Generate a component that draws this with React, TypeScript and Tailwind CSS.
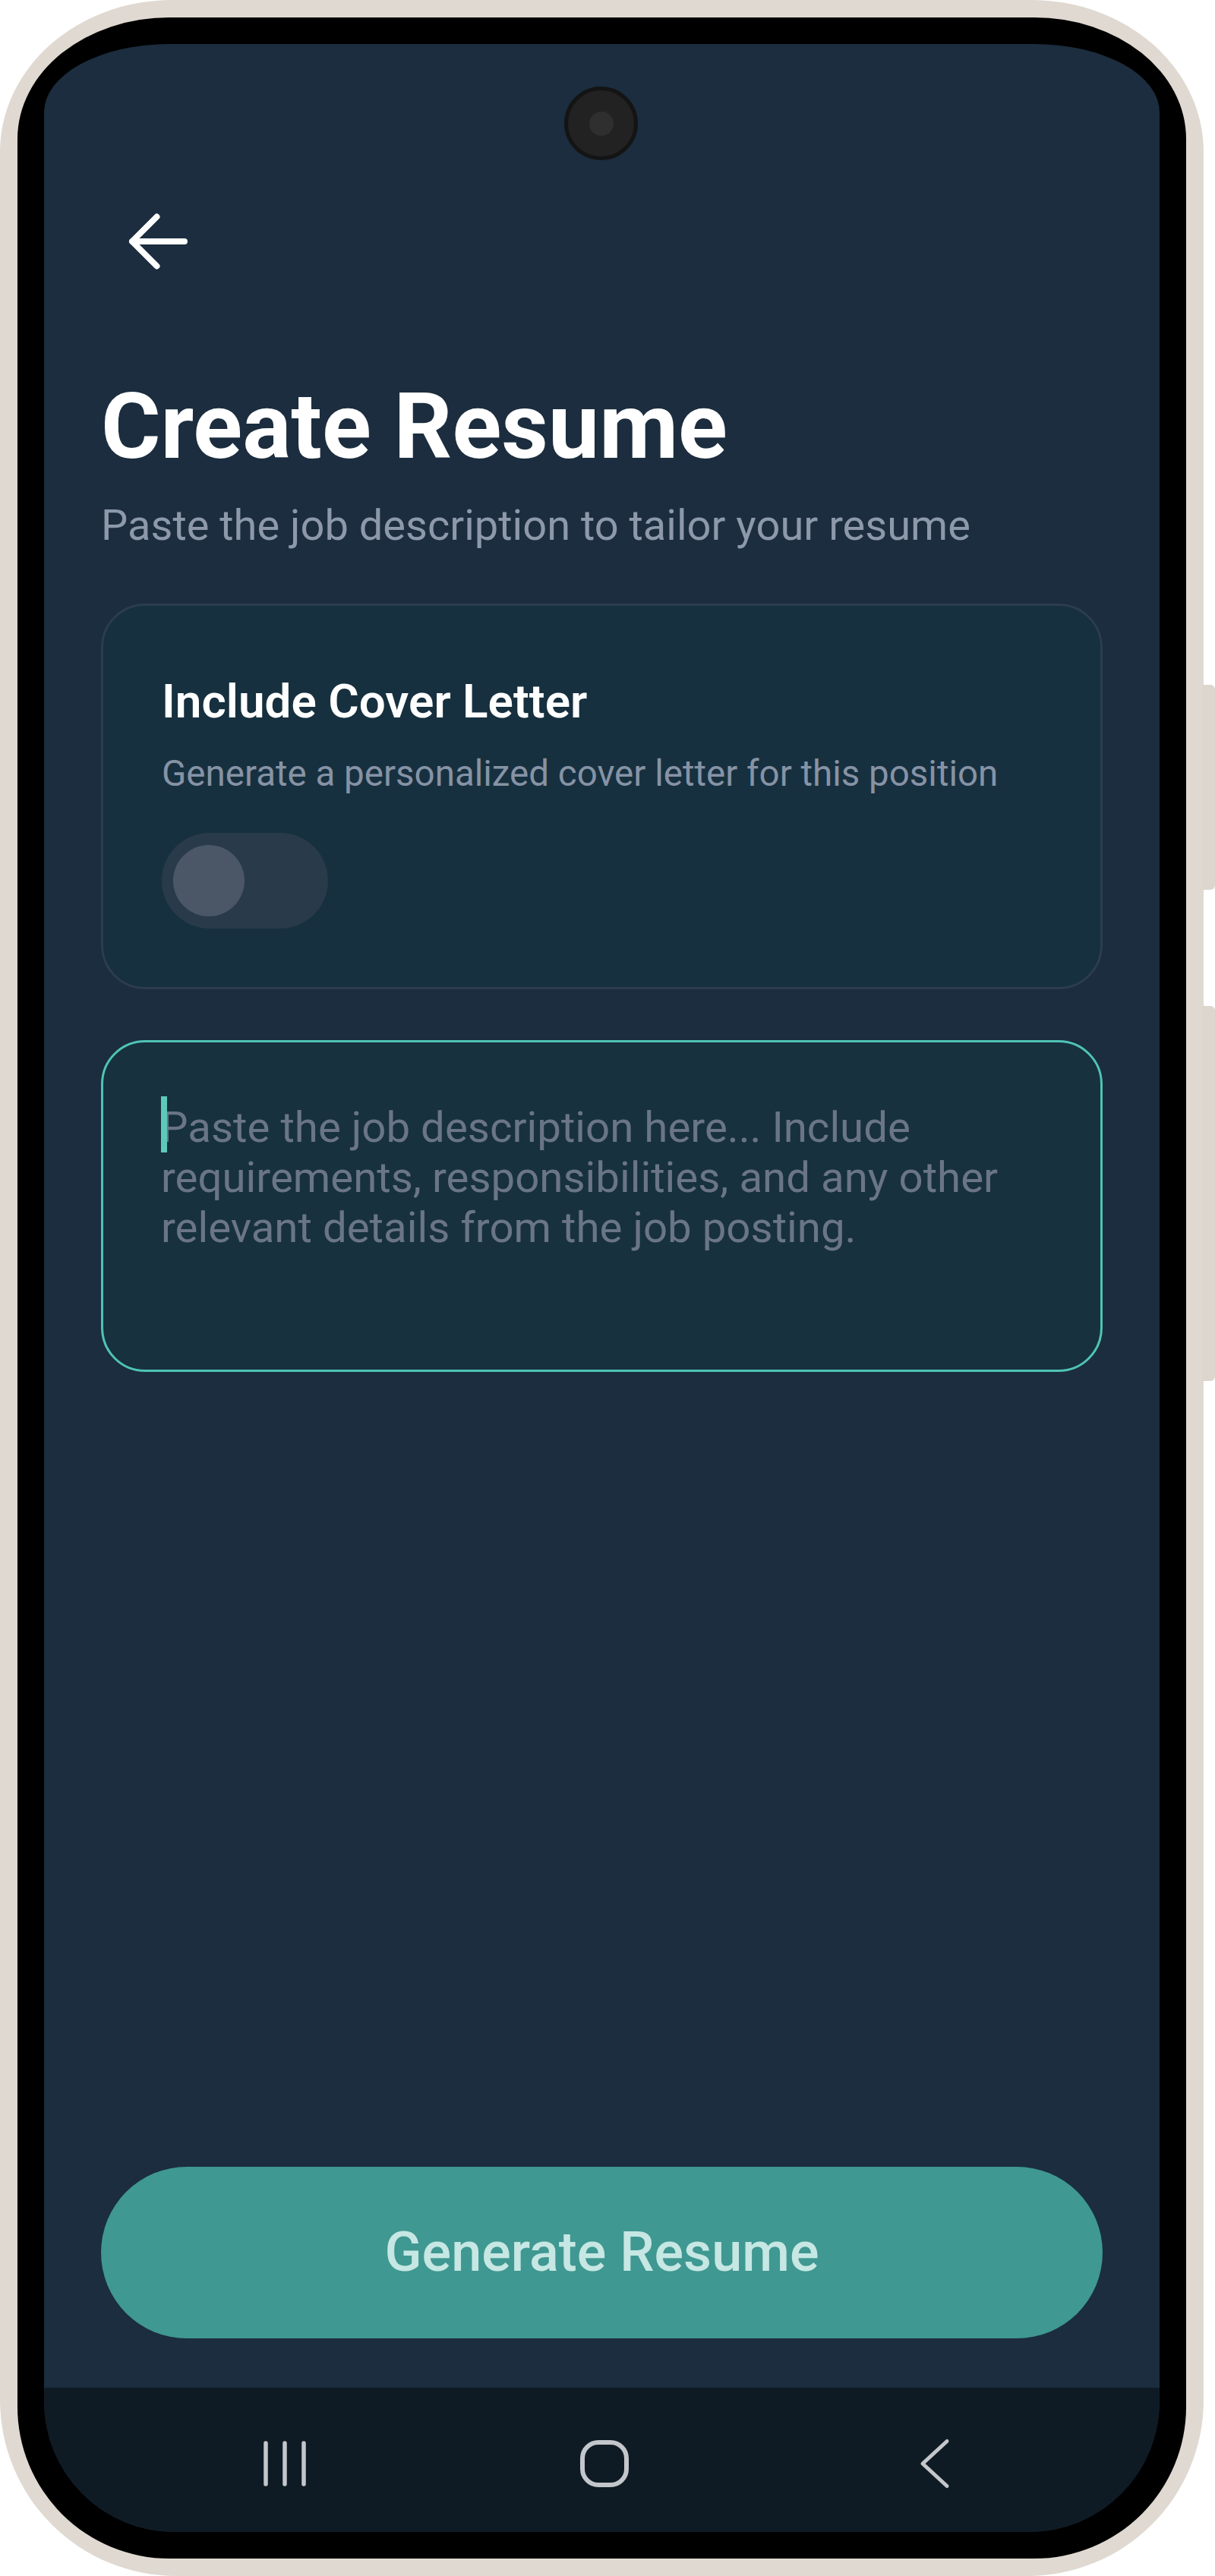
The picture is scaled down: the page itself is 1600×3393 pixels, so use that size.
import React from "react";

function BackArrow() {
  return (
    <svg width="80" height="80" viewBox="0 0 80 80" fill="none" stroke="#ffffff" strokeWidth="8" strokeLinecap="round" strokeLinejoin="round">
      <path d="M74 40H5M37.5 7.5 5 40l32.5 32.5" />
    </svg>
  );
}

function NavBar() {
  return (
    <div className="flex h-[190px] shrink-0 items-center bg-[#0f1b24] pl-[287px] pt-[10px]">
      {/* recents */}
      <svg width="60" height="62" viewBox="0 0 60 62" fill="none" stroke="#c3c7cb" strokeWidth="5.5" strokeLinecap="round">
        <path d="M5 4v54M30 4v54M55 4v54" />
      </svg>
      {/* home */}
      <svg className="ml-[356px]" width="70" height="70" viewBox="0 0 70 70" fill="none" stroke="#c3c7cb" strokeWidth="6">
        <rect x="6" y="7" width="58" height="56" rx="21" />
      </svg>
      {/* back */}
      <svg className="ml-[380px]" width="40" height="70" viewBox="0 0 40 70" fill="none" stroke="#c3c7cb" strokeWidth="5" strokeLinecap="round" strokeLinejoin="round">
        <path d="M36 5.5 4 35l32 29.5" />
      </svg>
    </div>
  );
}

export default function App() {
  return (
    <div className="relative h-[3393px] w-[1600px] bg-white font-[Roboto,sans-serif]">
      {/* phone shell */}
      <div className="h-full w-[1585px] rounded-tl-[227px_200px] rounded-tr-[227px_200px] rounded-bl-[232px] rounded-br-[232px] bg-[#e0d9d1] p-[23px]">
        <div className="h-full rounded-tl-[200px_160px] rounded-tr-[200px_160px] rounded-bl-[200px] rounded-br-[200px] bg-black p-[35px]">
          <div className="relative flex h-full flex-col overflow-hidden rounded-tl-[165px_90px] rounded-tr-[165px_90px] rounded-bl-[172px] rounded-br-[172px] bg-[#1b2d3e]">
            {/* front camera */}
            <div className="absolute left-[685px] top-[56px] flex h-[97px] w-[97px] items-center justify-center rounded-full border-[5px] border-[#141414] bg-[#222222]">
              <div className="h-[32px] w-[32px] rounded-full bg-[#2f2f2f]"></div>
            </div>

            <div className="flex flex-1 flex-col px-[75px]">
              <div className="ml-[36px] pt-[220px]">
                <BackArrow />
              </div>

              <h1 className="mt-[144px] text-[120px] font-bold leading-[120px] text-white">
                Create Resume
              </h1>
              <p className="mt-[35px] text-[56px] leading-[70px] text-[#8d99aa]">
                Paste the job description to tailor your resume
              </p>

              {/* cover letter card */}
              <div className="mt-[68px] rounded-[58px] border-[3px] border-[#2b3d4f] bg-[#17303f] pb-[77px] pl-[77px] pr-[76px] pt-[88px]">
                <div className="text-[62px] font-semibold leading-[76px] text-white">Include Cover Letter</div>
                <div className="mt-[29px] text-[47.5px] leading-[56px] text-[#8693a5]">
                  Generate a personalized cover letter for this position
                </div>
                <div className="mt-[50px] flex h-[126px] w-[219px] items-center rounded-full bg-[#293a4b] pl-[15px]">
                  <div className="h-[94px] w-[94px] rounded-full bg-[#4b5767]"></div>
                </div>
              </div>

              {/* job description input */}
              <div className="mt-[67px] h-[437px] rounded-[58px] border-[3px] border-[#4fc4b6] bg-[#17313f] pl-[76px] pr-[76px] pt-[79px]">
                <div className="relative text-[56.4px] leading-[66px] text-[#6a7587]">
                  <span className="absolute left-0 top-[-8px] h-[74px] w-[8px] bg-[#5cc9bc]"></span>
                  Paste the job description here... Include
                  <br />
                  requirements, responsibilities, and any other
                  <br />
                  relevant details from the job posting.
                </div>
              </div>

              <div className="flex-1"></div>

              <button className="mb-[65px] flex h-[226px] w-full items-center justify-center rounded-full bg-[#3f9891] text-[72px] font-medium text-[#c6e7e3]">
                Generate Resume
              </button>
            </div>

            <NavBar />
          </div>
        </div>
      </div>

      {/* side keys */}
      <div className="absolute left-[1583px] top-[902px] h-[270px] w-[17px] rounded-r-[6px] bg-[#ddd6ce]"></div>
      <div className="absolute left-[1583px] top-[1325px] h-[494px] w-[17px] rounded-r-[6px] bg-[#ddd6ce]"></div>
    </div>
  );
}
